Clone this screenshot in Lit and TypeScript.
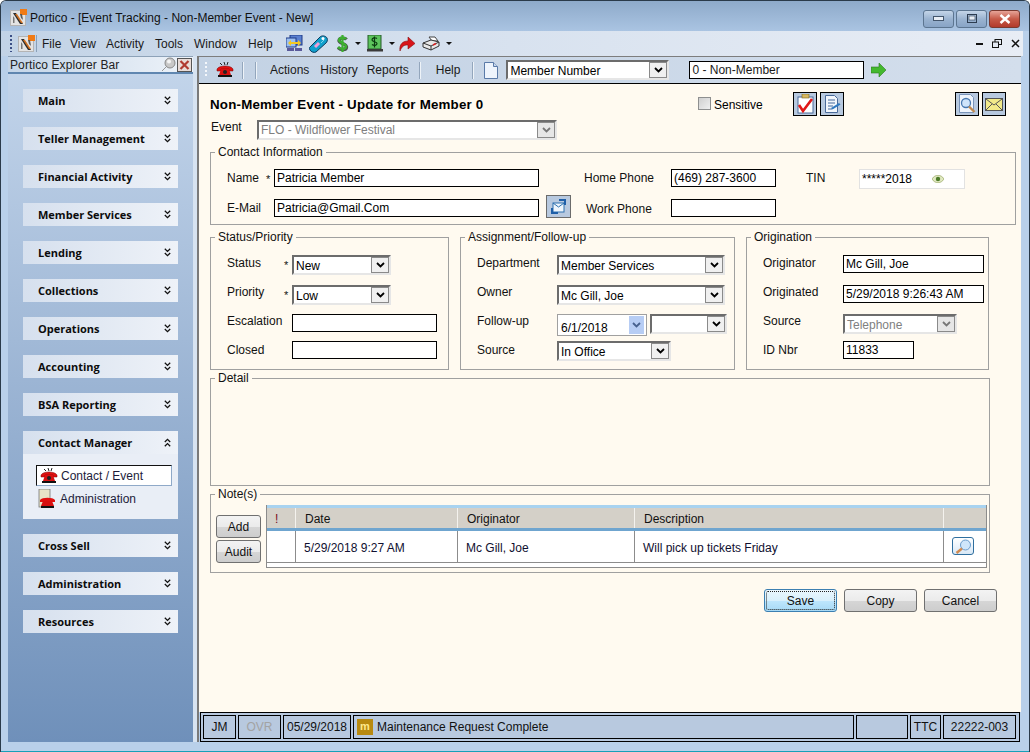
import { LitElement, html, css } from "lit";
import { customElement } from "lit/decorators.js";

const logo = html`<svg width="17" height="17" viewBox="0 0 17 17"><rect x=".5" y="1.500" width="15" height="15" fill="#e4e4e4" stroke="#b4b4b4"/><rect x="10" y="0" width="7" height="6" fill="#f07a14"/><path d="M3 4l3 0 7 11h-3z" fill="#2b2b2b"/><path d="M3 7v7h1.500V9z" fill="#777"/><path d="M10 5l2 0 1 6-2-2z" fill="#5a5a5a"/><path d="M5 5l2 0 6 9-2 0z" fill="#e87a1e" opacity=".85"/></svg>`;
const phone = html`<svg width="18" height="16" viewBox="0 0 18 16"><path d="M8 0l1 3M12 0l-1 3M4 1l2 2" stroke="#222" fill="none"/><path d="M1 7c2-4 14-4 16 0v2h-4V7H5v2H1z" fill="#e01010" stroke="#700" stroke-width=".5"/><path d="M5 7h8l2 6H3z" fill="#d81010"/><circle cx="9" cy="10" r="2" fill="#222"/><rect x="2" y="13" width="14" height="2" fill="#111"/></svg>`;
const phoneDoc = html`<svg width="18" height="20" viewBox="0 0 18 20"><rect x="1" y="0" width="11" height="18" fill="#e8e4c8" stroke="#777" stroke-width=".8"/><path d="M2 11c2-3 13-3 15 0v2h-3v-1H5v1H2z" fill="#e01010"/><path d="M5 12h9l2 5H3z" fill="#d81010"/><rect x="3" y="17" width="13" height="2" fill="#111"/></svg>`;
const chev = html`<svg width="9" height="6" viewBox="0 0 9 6"><path d="M1 1l3.500 3.500L8 1" fill="none" stroke="currentColor" stroke-width="1.800"/></svg>`;
const dblDown = html`<svg width="7" height="9" viewBox="0 0 7 9"><path d="M.8 .8l2.700 2.600L6.200 .8M.8 5l2.700 2.600L6.200 5" fill="none" stroke="#111" stroke-width="1.300"/></svg>`;
const dblUp = html`<svg width="7" height="9" viewBox="0 0 7 9"><path d="M.8 4l2.700-2.600L6.200 4M.8 8.200l2.700-2.600 2.700 2.600" fill="none" stroke="#111" stroke-width="1.300"/></svg>`;
const caret = html`<svg class="caret" width="6" height="3" viewBox="0 0 6 3"><path d="M0 0h6L3 3z" fill="#111"/></svg>`;

function combo(text: string, cls = "", disabled = false) {
  return html`<div class="combo ${cls} ${disabled ? "dis" : ""}"><span>${text}</span><i class="arrow">${chev}</i></div>`;
}
function input(text: string, cls = "") {
  return html`<div class="inp ${cls}">${text}</div>`;
}

@customElement("app-root")
export class AppRoot extends LitElement {
  static styles = css`
    :host { display: block; width: 1030px; height: 752px; background: #fff; overflow: hidden;
      font: 12px/14px "Liberation Sans", Arial, sans-serif; color: #000; }
    * { box-sizing: border-box; }
    .win { width: 1030px; height: 752px; display: flex; flex-direction: column;
      border: 1px solid #2a3a4a; border-bottom: 0; border-radius: 6px 6px 0 0; overflow: hidden;
      background: #b9d0ea; }
    .title { height: 30px; flex: none; display: flex; align-items: center; padding: 0 9px 0 9px;
      background: linear-gradient(#8eaaca, #aac4e2); }
    .title .t { margin-left: 3px; margin-top: 3px; color: #101010; flex: 1; }
    .title .ico { margin-top: 3px; }
    .wb { width: 31px; height: 18px; border: 1px solid #5c7590; border-radius: 3px; margin-left: 2px; margin-top: 5px;
      background: linear-gradient(#c4d5e8, #9ab3d0 50%, #88a4c6); display: grid; place-items: center; }
    .wb.close { background: linear-gradient(#e6a498, #c65a48 50%, #b23a2c); border-color: #7a3a30; }
    .menu { height: 25px; flex: none; display: flex; align-items: center; padding: 0 0 0 9px; margin-right: 6px;
      background: linear-gradient(90deg, #c2d3e6, #d8e2ef 50%, #e8edf5); }
    .grip { width: 2px; height: 17px; background: repeating-linear-gradient(#3b4f86 0 2px, transparent 2px 4px); }
    .menu .grip { margin-right: 6px; }
    .menu .vb { width: 1px; height: 17px; background: #8aa0b8; margin: 0 5px 0 1px; }
    .mis { display: grid; grid-template-columns: 28px 36px 49px 39px 54px 38px; color: #1a1a1a; margin-top: 1px; }
    .ico { display: flex; align-items: center; flex: none; }
    .caret { margin-left: 6px; }
    .i2 { margin-left: 6px; }
    .i3 { margin-left: 8px; }
    .i4 { margin-left: 6px; }
    .i5 { margin-left: 4px; }
    .i6 { margin-left: 6px; }
    .mdi { margin-left: auto; display: flex; gap: 9px; align-items: center; padding-right: 3px; }
    .mid { flex: 1; display: flex; min-height: 0; }
    .side { width: 185px; margin-left: 7px; flex: none; display: flex; flex-direction: column; }
    .ehead { height: 18px; display: flex; align-items: center; padding-left: 2px; border-bottom: 2px solid #5f86b0; border-top: 1px solid #8da2b8;
      background: linear-gradient(90deg, #c4d5e8, #eef3f9); flex: none; color: #222; }
    .ehead span { flex: 1; letter-spacing: .1px; }
    .ehead svg { margin-right: 1px; }
    .panel { flex: 1; padding: 15px 15px 0; display: flex; flex-direction: column; gap: 15px;
      background: linear-gradient(#c2d4ea, #6f90ba); }
    .group { width: 155px; }
    .gh { height: 23px; display: flex; align-items: center; justify-content: space-between; padding: 0 7px 0 15px;
      background: linear-gradient(90deg, #d6e0ee, #eef2f8);
      font: bold 11px/14px "Open Sans", "Liberation Sans", sans-serif; color: #0c0c0c; }
    .gb { height: 65px; background: #e9eef6; padding: 11px 6px 0 13px; }
    .gi { height: 21px; display: flex; align-items: center; gap: 4px; padding-left: 2px; color: #1c1c3a; margin-bottom: 2px; }
    .gi.sel { background: #fff; border: 1px solid #8fa9c8; border-left-color: #111; border-top-color: #111; padding-left: 3px; gap: 3px; }
    .split { width: 6px; flex: none; background: linear-gradient(90deg, #d7e3f1 0 4px, #7a7a7a 4px); }
    .main { width: 822px; flex: none; display: flex; flex-direction: column; }
    .tb { height: 28px; flex: none; display: flex; align-items: center; padding-left: 6px; border-top: 1px solid #7d7d7d;
      border-bottom: 1px solid #000; background: linear-gradient(90deg, #c3d2e4, #d3deec); color: #1a1a1a; }
    .tb .grip { background: repeating-linear-gradient(#f4f7fb 0 2px, transparent 2px 4px); height: 16px; margin-right: 9px; }
    .sep { width: 1px; height: 17px; background: #93a6bc; box-shadow: 1px 0 #eef3f8; flex: none; }
    .s1 { margin-left: 8px; }
    .s2 { margin-left: 12px; }
    .t1 { margin-left: 14px; }
    .t2 { margin-left: 11px; }
    .t3 { margin-left: 9px; }
    .s3 { margin-left: 10px; }
    .t4 { margin-left: 16px; }
    .s4 { margin-left: 12px; }
    .t5 { margin-left: 11px; }
    .tcombo { width: 163px; margin-left: 8px; }
    .tinp { width: 175px; margin-left: 20px; }
    .t6 { margin-left: 7px; }
    .content { flex: 1; min-height: 0; background: #fffaf0; padding: 8px 0 0 11px; display: flex; flex-direction: column; }
    .hdr { height: 24px; flex: none; display: grid; grid-template-columns: 488px 95px 24px 3px 24px 111px 24px 3px 24px; align-items: center; }
    .hdr h1 { margin: 0; font: bold 13.33px/16px "Liberation Sans", sans-serif; letter-spacing: .2px; padding-top: 1px; }
    .sens { display: flex; align-items: center; gap: 3px; }
    .sens span { padding-top: 2px; }
    .cb { width: 13px; height: 13px; border: 1px solid #8e8f8f; background: linear-gradient(135deg, #cfcfcf, #f0f0f0); margin-top: -2px; }
    .ib { width: 24px; height: 24px; border: 1px solid #000; background: #b8c9df; display: grid; place-items: center; }
    .ev { height: 19px; margin-top: 4px; flex: none; display: grid; grid-template-columns: 46px 300px; padding-left: 1px; color: #111; }
    .combo { height: 20px; display: flex; align-items: center; justify-content: space-between; background: #fff;
      border: 2px solid; border-color: #6c6c6c #e6e6e6 #e6e6e6 #6c6c6c; padding-left: 2px; color: #000; overflow: hidden; }
    .combo span { white-space: nowrap; padding-top: 1px; }
    .ev .combo span { padding-top: 0; }
    .combo.dis span { color: #808080; }
    .arrow { width: 18px; height: 16px; flex: none; border: 1px solid #8a8a8a; background: #f0f0f0; display: grid; place-items: center; color: #000; }
    .combo.dis .arrow { background: #e6e6e6; color: #777; }
    .inp { height: 18px; border: 1px solid #000; background: #fff; padding-left: 2px; line-height: 16px; white-space: nowrap; overflow: hidden; }
    fieldset { margin: 0; padding: 0; border: 1px solid #a0a0a0; min-width: 0; display: block; }
    legend { margin-left: 4px; padding: 0 3px; line-height: 14px; color: #111; }
    .contact { width: 806px; height: 80px; margin-top: 6px; flex: none; }
    .cg { display: grid; padding: 10px 0 0 16px;
      grid-template-columns: 39px 8px 265px 7px 25px 13px 87px 105px 30px 53px 106px; grid-template-rows: 18px 18px; row-gap: 12px; }
    .lab { align-self: center; color: #111; white-space: nowrap; }
    .star { align-self: center; font-size: 11px; line-height: 14px; padding-top: 2px; color: #111; }
    .swap { width: 25px; height: 23px; margin-top: -4px; background: #b8c9df; border: 1px solid #6b6b6b; display: grid; place-items: center; }
    .shift { padding: 1px 0 0 2px; }
    .tin { height: 20px; border: 1px solid #e2e2e2; background: #fff; display: flex; align-items: center; justify-content: space-between; padding: 0 20px 0 2px; }
    .row3 { display: flex; margin-top: 5px; flex: none; height: 140px; }
    .row3 fieldset { height: 140px; }
    .fs1 { width: 239px; }
    .fs2 { width: 275px; margin-left: 11px; }
    .fs3 { width: 243px; margin-left: 11px; }
    .g3 { display: grid; padding-top: 11px; }
    .g1 { padding-left: 16px; grid-template-columns: 57px 8px 146px; grid-template-rows: 30px 29px 27px 18px; }
    .g2 { padding-left: 16px; grid-template-columns: 80px 170px; grid-template-rows: 30px 29px 27px 20px; }
    .g4 { padding-left: 16px; grid-template-columns: 80px 141px; grid-template-rows: 30px 29px 27px 18px; }
    .g3 .lab { align-self: start; }
    .g3 .lab.l1 { margin-top: 1px; }
    .g3 .lab.l4 { margin-top: 2px; }
    .g3 .star { align-self: start; padding-top: 3px; }
    .g3 .ctl { justify-self: start; }
    .w99 { width: 99px; }
    .w145 { width: 145px; }
    .w168 { width: 168px; }
    .w114 { width: 114px; }
    .w141 { width: 141px; }
    .w71 { width: 71px; }
    .w77 { width: 77px; }
    .fu { display: flex; gap: 3px; }
    .date { width: 90px; height: 22px; border: 1px solid #a0a0a0; background: #fff; display: flex; align-items: flex-end; justify-content: space-between; padding: 0 2px 0 3px; }
    .date b { width: 15px; height: 18px; margin-bottom: 1px; background: #b7cdf4; color: #47618f; display: grid; place-items: center; }
    .detail { width: 780px; height: 115px; margin-top: 1px; flex: none; }
    .notes { width: 780px; height: 86px; margin-top: 1px; flex: none; }
    .nb { display: flex; padding: 4px 0 0 5px; gap: 5px; }
    .nbtn { display: flex; flex-direction: column; gap: 2px; padding-top: 10px; }
    .btn { height: 23px; border: 1px solid #707070; border-radius: 3px; background: linear-gradient(#f3f3f3, #ebebeb 50%, #d6d6d6 52%, #cdcdcd);
      display: grid; place-items: center; color: #111; }
    .nbtn .btn { width: 45px; }
    .tbl { width: 721px; height: 63px; border: 1px solid #8c8c8c; border-width: 0 1px 1px; background: #fff; }
    .tbl .top { height: 3px; background: #a9d3f0; }
    .tr { display: grid; grid-template-columns: 29px 162px 177px 309px 1fr; }
    .th { height: 20px; background: #d4d0c8; border-right: 1px solid #f4f2ee; padding: 4px 0 0 9px; color: #111; }
    .th:last-child { border-right: 0; }
    .th.ex { color: #7a0c1c; padding-left: 8px; }
    .tbl .mid2 { height: 3px; background: #6fa5cf; }
    .td { height: 32px; border-right: 1px solid #8c8c8c; border-bottom: 1px solid #8c8c8c; padding: 10px 0 0 8px; color: #101030; }
    .td:last-child { border-right: 0; padding: 6px 0 0 8px; }
    .look { width: 22px; height: 18px; border: 1px solid #2f6f9f; border-radius: 3px; background: linear-gradient(#fff, #d8e8f6); display: grid; place-items: center; }
    .acts { display: flex; margin: 16px 0 0 554px; gap: 7px; }
    .acts .btn { width: 73px; }
    .btn.def { border-color: #3c7fb1; background: linear-gradient(#eaf6fd, #d9f0fc 50%, #bee6fd 52%, #a7d9f5); position: relative; }
    .btn.def::after { content: ""; position: absolute; inset: 1px; border: 1px dotted #222; border-radius: 2px; }
    .stat { height: 30px; flex: none; margin: 0 0 0 1px; border: 1px solid #000; background: #b8c9df; width: 820px;
      display: grid; grid-template-columns: 33px 43px 68px 501px 52px 31px 73px; column-gap: 2px; padding: 2px 0 0 2px; }
    .cell { height: 24px; border: 1px solid #000; display: flex; align-items: center; justify-content: center; color: #111; }
    .cell.left { justify-content: flex-start; padding-left: 3px; gap: 4px; }
    .cell.off { color: #a3a3a3; }
    .mm { width: 16px; height: 16px; background: #b88a10; color: #ffe98a; font: bold 11px/15px "Liberation Sans", sans-serif; text-align: center; }
    .foot { height: 10px; flex: none; border-bottom: 1px solid #16a0b8; }
  `;

  private groupH(name: string, open = false) {
    return html`<div class="gh"><span>${name}</span>${open ? dblUp : dblDown}</div>`;
  }

  render() {
    const before = ["Main", "Teller Management", "Financial Activity", "Member Services", "Lending", "Collections", "Operations", "Accounting", "BSA Reporting"];
    const after = ["Cross Sell", "Administration", "Resources"];
    return html`<div class="win">
      <div class="title">
        <span class="ico">${logo}</span>
        <span class="t">Portico - [Event Tracking - Non-Member Event - New]</span>
        <div class="wb"><svg width="11" height="5"><rect x=".5" y=".5" width="10" height="4" fill="#e8eef5" stroke="#44566c"/></svg></div>
        <div class="wb"><svg width="10" height="9"><rect x=".5" y=".5" width="9" height="8" fill="none" stroke="#2c3c50"/><rect x="2" y="2" width="6" height="4" fill="#e8eef5" stroke="#2c3c50" stroke-width=".6"/></svg></div>
        <div class="wb close"><svg width="12" height="10"><path d="M1.500 1l9 8M10.500 1l-9 8" stroke="#fff" stroke-width="2.400"/></svg></div>
      </div>
      <div class="menu">
        <div class="grip"></div>
        <span class="ico">${logo}</span>
        <div class="vb"></div>
        <div class="mis"><span>File</span><span>View</span><span>Activity</span><span>Tools</span><span>Window</span><span>Help</span></div>
        <span class="ico">
          <svg width="17" height="17" viewBox="0 0 17 17"><rect x="4" y="0" width="12" height="10" fill="#5a80d0" stroke="#1f3a88"/><rect x="0" y="3" width="10" height="9" fill="#9cc0f0" stroke="#1f3a88"/><path d="M3 8h11" stroke="#f4c820" stroke-width="2"/><path d="M5 5L2 8l3 3zM12 5l3 3-3 3z" fill="#f4c820"/><rect x="1" y="13" width="7" height="3" fill="#5a5a9a"/><rect x="9" y="13" width="7" height="3" fill="#5a5a9a"/></svg>
        </span>
        <span class="ico i2">
          <svg width="19" height="18" viewBox="0 0 19 18"><path d="M1 12L11 2c2-2 6-1 7 1s0 4-1 5L7 17c-2 1-5 0-6-2s-1-2 0-3z" fill="#12a0cc" stroke="#0c3c60"/><circle cx="14" cy="3.500" r="1.500" fill="#fff"/><path d="M6 12l4-4" stroke="#f0a0d8" stroke-width="3"/><path d="M12 8l3-3" stroke="#7fd4ea"/></svg>
        </span>
        <span class="ico i3">
          <svg width="13" height="18" viewBox="0 0 13 18"><path d="M10.500 4.500C9 2.500 3.500 2.500 3 5.500s7.500 3 7.500 6.500-6 3-8.500.5" fill="none" stroke="#4a5a4a" stroke-width="3.400"/><path d="M10 4C8.500 2 3.500 2 3 5s7.500 3 7 6.500-6 3-8 .5M6.500 0v17" fill="none" stroke="#3cb030" stroke-width="2.200"/></svg>${caret}
        </span>
        <span class="ico i4">
          <svg width="16" height="17" viewBox="0 0 16 17"><rect x="1" y="0" width="13" height="14" fill="#5cc45c" stroke="#245a28"/><path d="M10 3.500C8 2 5 3 5 5s5 1.500 5 3.500S7 11 5 9.500M7.500 1.500v11" fill="none" stroke="#0b3a10" stroke-width="1.200"/><rect x="0" y="14" width="16" height="2.500" fill="#3a3a3a"/></svg>${caret}
        </span>
        <span class="ico i5">
          <svg width="17" height="16" viewBox="0 0 17 16"><path d="M1 15C0 8 4 5 9 5V1l7 6.500L9 13V9C5 9 3 10 1 15z" fill="#d8151a" stroke="#8a1010" stroke-width=".6"/></svg>
        </span>
        <span class="ico i6">
          <svg width="18" height="15" viewBox="0 0 18 15"><path d="M7 1h6l3 4H10z" fill="#fff" stroke="#444"/><path d="M1 7l8-3 8 2v4l-8 4-8-3z" fill="#e8e8e8" stroke="#333"/><path d="M1 7l8 3 8-4M9 10v4" fill="none" stroke="#333"/><path d="M11 9l3-1.500" stroke="#d82020" stroke-width="1.500"/></svg>${caret}
        </span>
        <div class="mdi">
          <svg width="7" height="3"><rect width="7" height="2" y="1" fill="#111"/></svg>
          <svg width="10" height="9" viewBox="0 0 10 9"><rect x="3" y=".5" width="6.500" height="5" fill="none" stroke="#111"/><rect x=".5" y="3" width="6" height="5.500" fill="#e2e8f2" stroke="#111"/></svg>
          <svg width="9" height="9"><path d="M1 1l7 7M8 1l-7 7" stroke="#111" stroke-width="1.500"/></svg>
        </div>
      </div>
      <div class="mid">
        <div class="side">
          <div class="ehead"><span>Portico Explorer Bar</span>
            <svg width="15" height="15" viewBox="0 0 15 15"><path d="M1 14l5-5" stroke="#999"/><circle cx="9" cy="6" r="5" fill="#c8c8c8" stroke="#888"/><circle cx="8" cy="4.500" r="2" fill="#f4f4f4"/></svg>
            <svg width="15" height="14" viewBox="0 0 15 14"><rect x=".5" y=".5" width="14" height="13" fill="#e8dcd8" stroke="#555"/><path d="M3.500 3l8 8M11.500 3l-8 8" stroke="#b03a30" stroke-width="2.200"/></svg>
          </div>
          <div class="panel">
            ${before.map((n) => html`<div class="group">${this.groupH(n)}</div>`)}
            <div class="group">${this.groupH("Contact Manager", true)}
              <div class="gb">
                <div class="gi sel">${phone}<span>Contact / Event</span></div>
                <div class="gi">${phoneDoc}<span>Administration</span></div>
              </div>
            </div>
            ${after.map((n) => html`<div class="group">${this.groupH(n)}</div>`)}
          </div>
        </div>
        <div class="split"></div>
        <div class="main">
          <div class="tb">
            <div class="grip"></div>
            <span class="ico">${phone}</span>
            <div class="sep s1"></div>
            <div class="sep s2"></div>
            <span class="t1">Actions</span>
            <span class="t2">History</span>
            <span class="t3">Reports</span>
            <div class="sep s3"></div>
            <span class="t4">Help</span>
            <div class="sep s4"></div>
            <span class="ico t5"><svg width="14" height="17" viewBox="0 0 14 17"><path d="M.5 .5h9l4 4v12H.5z" fill="#eef4fc" stroke="#5a7aa8"/><path d="M9.500 .5v4h4" fill="#c8d8ec" stroke="#5a7aa8"/></svg></span>
            ${combo("Member Number", "tcombo")}
            ${input("0 - Non-Member", "tinp")}
            <span class="ico t6"><svg width="15" height="14" viewBox="0 0 15 14"><path d="M0 4h8V0l7 7-7 7v-4H0z" fill="#43b82e" stroke="#2c7a1e" stroke-width=".6"/></svg></span>
          </div>
          <div class="content">
            <div class="hdr">
              <h1>Non-Member Event - Update for Member 0</h1>
              <div class="sens"><div class="cb"></div><span>Sensitive</span></div>
              <div class="ib"><svg width="20" height="20" viewBox="0 0 20 20"><rect x="3" y="3" width="15" height="16" fill="#fff" stroke="#4a6a9a"/><rect x="7" y="0" width="7" height="4" fill="#d8b860" stroke="#7a6420" stroke-width=".6"/><path d="M4 11l4 6L17 5" fill="none" stroke="#e01818" stroke-width="2.600"/></svg></div>
              <span></span>
              <div class="ib"><svg width="18" height="18" viewBox="0 0 18 18"><path d="M2.500 .5h9l3 3v14h-12z" fill="#f2f6fc" stroke="#4a6a9a"/><path d="M5 5h7M5 8h7M5 11h5M5 14h4" stroke="#44689c"/><path d="M8 13l8-5 1.500 1.500-8 5z" fill="#2f78c0"/></svg></div>
              <span></span>
              <div class="ib"><svg width="19" height="20" viewBox="0 0 19 20"><path d="M1.500 .5h11l3 3v15h-14z" fill="#eef4fc" stroke="#7a94ba"/><circle cx="8" cy="9" r="4.500" fill="#cfe4fa" stroke="#4878b0" stroke-width="1.300"/><path d="M11 12.500l5.500 5.500" stroke="#c08a50" stroke-width="2.400"/></svg></div>
              <span></span>
              <div class="ib"><svg width="18" height="13" viewBox="0 0 18 13"><rect x=".5" y=".5" width="17" height="12" fill="#f2ea8a" stroke="#555"/><path d="M1 1l8 6 8-6M1 12l6-6M17 12l-6-6" fill="none" stroke="#555"/></svg></div>
            </div>
            <div class="ev"><label>Event</label>${combo("FLO - Wildflower Festival", "", true)}</div>
            <fieldset class="contact">
              <legend>Contact Information</legend>
              <div class="cg">
                <span class="lab">Name</span><span class="star">*</span>${input("Patricia Member")}<span></span><span></span><span></span>
                <span class="lab">Home Phone</span>${input("(469) 287-3600")}<span></span><span class="lab">TIN</span>
                <div class="tin"><span>*****2018</span><svg width="12" height="8" viewBox="0 0 12 8"><path d="M0 4c3-5 9-5 12 0-3 5-9 5-12 0z" fill="#dfe8c0" stroke="#8a9a50" stroke-width=".6"/><circle cx="6" cy="4" r="2.200" fill="#4c7a28"/></svg></div>
                <span class="lab">E-Mail</span><span></span>${input("Patricia@Gmail.Com")}<span></span>
                <div class="swap"><svg width="17" height="17" viewBox="0 0 17 17"><rect x="3" y="5" width="11" height="9" fill="#eef5fc" stroke="#2c70b0"/><path d="M3 5l5.500 4L14 5" fill="none" stroke="#2c70b0"/><path d="M9 2h6v5M2 10v5h6" fill="none" stroke="#1f5fa8" stroke-width="2"/></svg></div>
                <span></span>
                <span class="lab shift">Work Phone</span>${input("")}<span></span><span></span><span></span>
              </div>
            </fieldset>
            <div class="row3">
              <fieldset class="fs1"><legend>Status/Priority</legend>
                <div class="g3 g1">
                  <span class="lab l1">Status</span><span class="star">*</span><div class="ctl">${combo("New", "w99")}</div>
                  <span class="lab">Priority</span><span class="star">*</span><div class="ctl">${combo("Low", "w99")}</div>
                  <span class="lab">Escalation</span><span></span><div class="ctl">${input("", "w145")}</div>
                  <span class="lab l4">Closed</span><span></span><div class="ctl">${input("", "w145")}</div>
                </div>
              </fieldset>
              <fieldset class="fs2"><legend>Assignment/Follow-up</legend>
                <div class="g3 g2">
                  <span class="lab l1">Department</span><div class="ctl">${combo("Member Services", "w168")}</div>
                  <span class="lab">Owner</span><div class="ctl">${combo("Mc Gill, Joe", "w168")}</div>
                  <span class="lab">Follow-up</span>
                  <div class="ctl fu"><div class="date"><span>6/1/2018</span><b>${chev}</b></div>${combo("", "w77")}</div>
                  <span class="lab l4">Source</span><div class="ctl">${combo("In Office", "w114")}</div>
                </div>
              </fieldset>
              <fieldset class="fs3"><legend>Origination</legend>
                <div class="g3 g4">
                  <span class="lab l1">Originator</span><div class="ctl">${input("Mc Gill, Joe", "w141")}</div>
                  <span class="lab">Originated</span><div class="ctl">${input("5/29/2018 9:26:43 AM", "w141")}</div>
                  <span class="lab">Source</span><div class="ctl">${combo("Telephone", "w114", true)}</div>
                  <span class="lab l4">ID Nbr</span><div class="ctl">${input("11833", "w71")}</div>
                </div>
              </fieldset>
            </div>
            <fieldset class="detail"><legend>Detail</legend></fieldset>
            <fieldset class="notes"><legend>Note(s)</legend>
              <div class="nb">
                <div class="nbtn"><div class="btn">Add</div><div class="btn">Audit</div></div>
                <div class="tbl">
                  <div class="top"></div>
                  <div class="tr"><div class="th ex">!</div><div class="th">Date</div><div class="th">Originator</div><div class="th">Description</div><div class="th"></div></div>
                  <div class="mid2"></div>
                  <div class="tr"><div class="td"></div><div class="td">5/29/2018 9:27 AM</div><div class="td">Mc Gill, Joe</div><div class="td">Will pick up tickets Friday</div>
                    <div class="td"><div class="look"><svg width="17" height="15" viewBox="0 0 17 15"><circle cx="10.500" cy="6" r="5" fill="#cfe6fa" stroke="#6a9ccc"/><path d="M7 9.500L1.500 14" stroke="#d08a50" stroke-width="2.400"/></svg></div></div>
                  </div>
                </div>
              </div>
            </fieldset>
            <div class="acts"><div class="btn def">Save</div><div class="btn">Copy</div><div class="btn">Cancel</div></div>
          </div>
          <div class="stat">
            <div class="cell">JM</div><div class="cell off">OVR</div><div class="cell">05/29/2018</div>
            <div class="cell left"><span class="mm">m</span><span>Maintenance Request Complete</span></div>
            <div class="cell"></div><div class="cell">TTC</div><div class="cell">22222-003</div>
          </div>
        </div>
      </div>
      <div class="foot"></div>
    </div>`;
  }
}
